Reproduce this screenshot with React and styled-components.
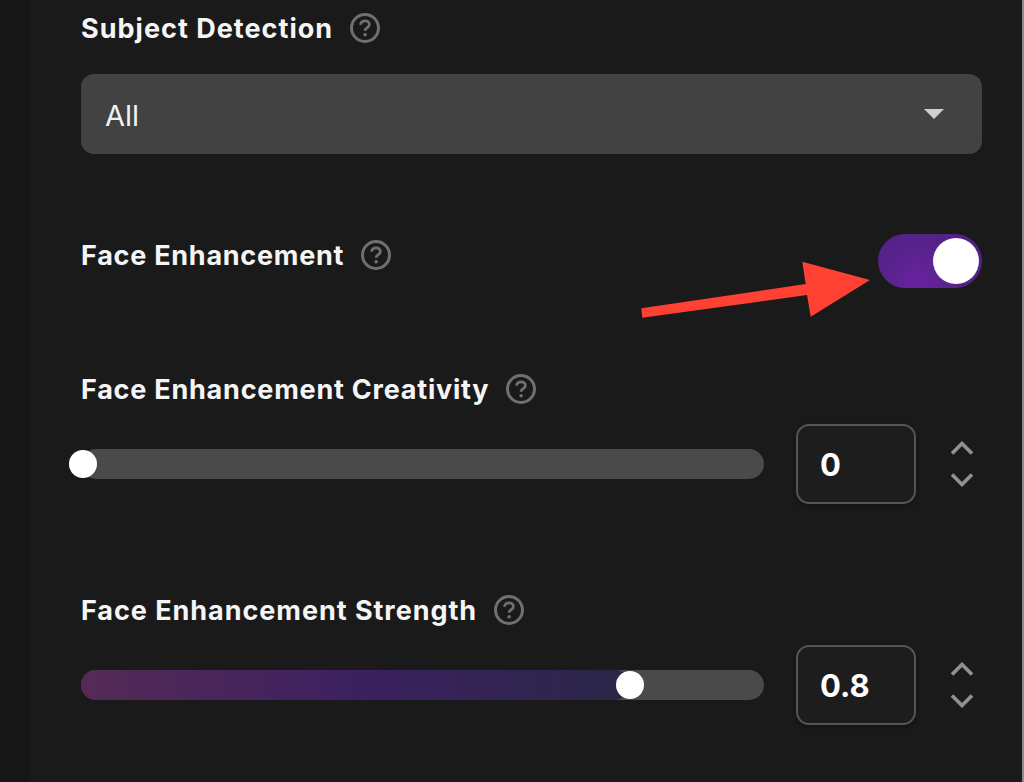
import React from 'react'
import styled, { createGlobalStyle } from 'styled-components'

const GlobalStyle = createGlobalStyle`
  html, body {
    margin: 0;
    padding: 0;
    height: 100%;
    background: #1a1a1a;
    overflow: hidden;
  }
`

const HelpIcon = () => (
  <HelpSvg viewBox="0 0 30 30">
    <circle cx="15" cy="15" r="13.5" fill="none" stroke="#707070" strokeWidth="3" />
    <path
      d="M10.6 11.8c0-2.5 2-4 4.5-4s4.3 1.5 4.3 3.6c0 3.2-4.3 3.3-4.3 6.3"
      fill="none"
      stroke="#707070"
      strokeWidth="2.8"
    />
    <circle cx="15.1" cy="21.8" r="1.8" fill="#707070" />
  </HelpSvg>
)

const Chevrons = () => (
  <Stepper>
    <svg width="24" height="14" viewBox="0 0 24 14">
      <path d="M2 12.5 12 2.5l10 10" fill="none" stroke="#919191" strokeWidth="3.6" />
    </svg>
    <svg width="24" height="14" viewBox="0 0 24 14">
      <path d="M2 1.5l10 10 10-10" fill="none" stroke="#919191" strokeWidth="3.6" />
    </svg>
  </Stepper>
)

const SliderRow = ({ value, percent, filled }) => (
  <Controls>
    <Track>
      {filled && <Fill style={{ width: `${percent}%` }} />}
      <Thumb style={{ left: `${percent}%` }} />
    </Track>
    <NumberBox>{value}</NumberBox>
    <Chevrons />
  </Controls>
)

const App = () => (
  <Page>
    <GlobalStyle />
    <SideStrip />
    <Panel>
      <FirstLabel $tracking={1.02}>
        Subject Detection
        <HelpIcon />
      </FirstLabel>
      <Select>
        All
        <Caret />
      </Select>

      <ToggleRow>
        <Label $tracking={0.74}>
          Face Enhancement
          <HelpIcon />
        </Label>
        <Toggle>
          <Knob />
        </Toggle>
      </ToggleRow>

      <SliderLabel $top={83} $tracking={0.77}>
        Face Enhancement Creativity
        <HelpIcon />
      </SliderLabel>
      <SliderRow value="0" percent={0.3} />

      <SliderLabel $top={88} $tracking={0.95}>
        Face Enhancement Strength
        <HelpIcon />
      </SliderLabel>
      <SliderRow value="0.8" percent={80.35} filled />
    </Panel>
    <EdgeStrip />
    <Arrow viewBox="0 0 1024 782">
      <polygon
        points="641.3,308.3 642.3,317.7 807,295 810.7,316.7 870,280 802.3,261.7 805.7,284"
        fill="#ff4133"
      />
    </Arrow>
  </Page>
)

const Page = styled.div`
  position: relative;
  display: flex;
  width: 1024px;
  height: 782px;
  overflow: hidden;
  background: #1a1a1a;
  color: #fff;
  font-family: Inter, 'Liberation Sans', sans-serif;
`

const SideStrip = styled.div`
  flex: 0 0 30px;
  background: #171717;
`

const EdgeStrip = styled.div`
  flex: 0 0 2px;
  background: #8c8c8c;
`

const Panel = styled.div`
  flex: 1;
  display: flex;
  flex-direction: column;
  padding: 10px 40px 0 51px;
`

const Label = styled.div`
  display: flex;
  align-items: center;
  gap: 17px;
  height: 36px;
  font-size: 27px;
  font-weight: 700;
  letter-spacing: ${(p) => p.$tracking}px;
  color: #f5f5f5;
  white-space: nowrap;
`

const FirstLabel = styled(Label)`
  margin-bottom: 28px;
`

const SliderLabel = styled(Label)`
  margin-top: ${(p) => p.$top}px;
  margin-bottom: 17px;
`

const HelpSvg = styled.svg`
  flex: none;
  width: 30px;
  height: 30px;
`

const Select = styled.div`
  display: flex;
  align-items: center;
  justify-content: space-between;
  box-sizing: border-box;
  height: 80px;
  padding: 2px 38px 0 24px;
  border-radius: 13px;
  background: #424242;
  font-size: 29px;
  color: #f2f2f2;
`

const Caret = styled.span`
  width: 0;
  height: 0;
  margin-top: -2px;
  border-left: 10px solid transparent;
  border-right: 10px solid transparent;
  border-top: 10px solid #cfcfcf;
`

const ToggleRow = styled.div`
  display: flex;
  align-items: flex-start;
  justify-content: space-between;
  height: 54px;
  margin-top: 80px;
  & > ${Label} {
    margin-top: 3px;
  }
`

const Toggle = styled.div`
  display: flex;
  align-items: center;
  justify-content: flex-end;
  box-sizing: border-box;
  width: 104px;
  height: 54px;
  padding-right: 3px;
  border-radius: 27px;
  background: radial-gradient(circle at 38% 85%, #6a22a0 0%, #58238c 40%, #4f1f80 100%);
`

const Knob = styled.div`
  width: 46px;
  height: 46px;
  border-radius: 50%;
  background: #fff;
`

const Controls = styled.div`
  display: flex;
  align-items: center;
  height: 80px;
`

const Track = styled.div`
  position: relative;
  flex: 0 0 683px;
  height: 30px;
  border-radius: 15px;
  background: #4a4a4a;
`

const Fill = styled.div`
  height: 100%;
  border-radius: 15px;
  background: linear-gradient(90deg, #552a56 0%, #3c2160 50%, #2a2647 100%);
`

const Thumb = styled.div`
  position: absolute;
  top: 1px;
  width: 28px;
  height: 28px;
  margin-left: -14px;
  border-radius: 50%;
  background: #fff;
`

const NumberBox = styled.div`
  display: flex;
  align-items: center;
  box-sizing: border-box;
  width: 120px;
  height: 80px;
  margin-left: 32px;
  padding-left: 22px;
  border: 2px solid #555;
  border-radius: 13px;
  background: #1d1d1d;
  box-shadow: 0 2px 4px rgba(0, 0, 0, 0.3);
  font-size: 31px;
  font-weight: 700;
`

const Stepper = styled.div`
  display: flex;
  flex-direction: column;
  gap: 18px;
  margin-left: 34px;
`

const Arrow = styled.svg`
  position: absolute;
  inset: 0;
  width: 1024px;
  height: 782px;
  pointer-events: none;
`

export default App
